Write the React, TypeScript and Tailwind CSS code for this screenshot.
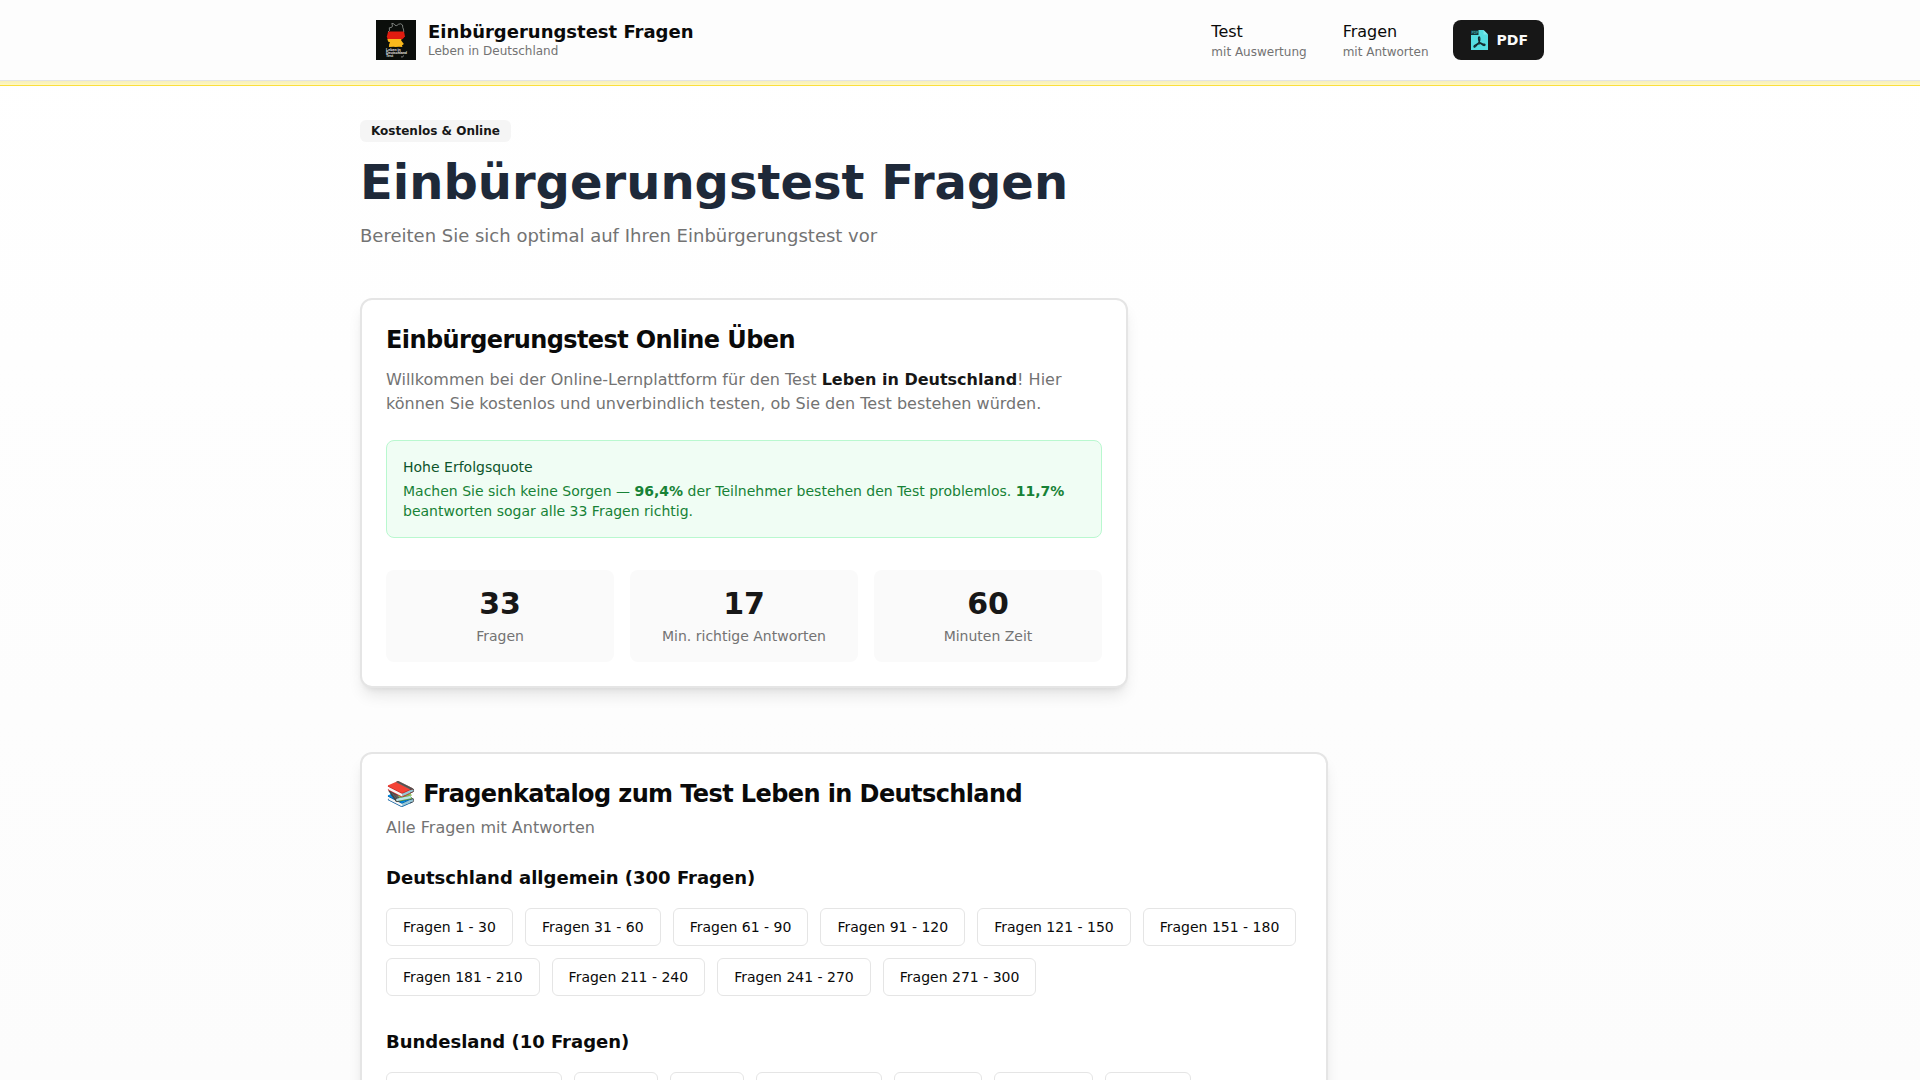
import { type ReactNode } from 'react';

const generalRanges = [
  'Fragen 1 - 30',
  'Fragen 31 - 60',
  'Fragen 61 - 90',
  'Fragen 91 - 120',
  'Fragen 121 - 150',
  'Fragen 151 - 180',
  'Fragen 181 - 210',
  'Fragen 211 - 240',
  'Fragen 241 - 270',
  'Fragen 271 - 300',
];

const states = [
  'Baden-Württemberg',
  'Bayern',
  'Berlin',
  'Brandenburg',
  'Bremen',
  'Hamburg',
  'Hessen',
];

const stats = [
  { value: '33', label: 'Fragen' },
  { value: '17', label: 'Min. richtige Antworten' },
  { value: '60', label: 'Minuten Zeit' },
];

function Logo() {
  return (
    <svg width="40" height="40" viewBox="0 0 40 40" aria-hidden="true">
      <rect width="40" height="40" fill="#0b0e0b" />
      <path d="M12.2 11.5h15.8l.5 2.5.4 2.2-1.2 1.8-1.5 1.2H11.6l-.8-2.7.7-2.500z" fill="#e01c10" />
      <path
        d="M11.4 19h14.100l-.4 1.300 1.600 2.200 1.200 1.500-2 1.600.6 1.400-3.500-.3-3.600.4-1.700-.4-4.800.2.300-3 .9-1.400-2-.9z"
        fill="#f9b81c"
      />
      <path
        d="M12.200 11.800l1.300-1.300-.2-2.700 2.400-.5.8-1.300-.7-2.600 2 .4 1.200 1.500 1.800.3 1.800-1.400 2.200-.4 1.700 1.200.3 2.700.6 1.300.4 2.800"
        fill="none"
        stroke="#a9ada9"
        strokeWidth="0.7"
      />
      <g
        fill="#e4e4e4"
        fontFamily="Liberation Sans, sans-serif"
        fontWeight="700"
        fontSize="3.6"
      >
        <text x="10" y="31.2">Leben in</text>
        <text x="10" y="34.4" textLength="21">Deutschland</text>
        <text x="10" y="37.4">Test</text>
      </g>
      <path d="M25 36.5l1 .8 2-1.8" fill="none" stroke="#d0d0d0" strokeWidth="0.6" />
    </svg>
  );
}

function PdfIcon() {
  return (
    <svg width="17" height="20" viewBox="0 0 17 20" aria-hidden="true">
      <path d="M0 0h12.5L17 4.5V20H0z" fill="#55dde0" />
      <path d="M12.5 0v4.5H17z" fill="#7fe9ea" />
      <rect width="7.5" height="5" fill="#123236" />
      <text
        x="0.5"
        y="3.9"
        fontFamily="Liberation Sans, sans-serif"
        fontSize="3.4"
        fontWeight="700"
        fill="#3fa9ac"
      >
        PDF
      </text>
      <g fill="none" stroke="#14282b" strokeWidth="1.2" strokeLinecap="round">
        <path d="M8.2 12.2c1-2 .9-5.3-.1-5.3s-.7 3.2.3 5.3" />
        <path d="M8.3 12.2c-1.2 1.5-2.3 2.1-4 2.9-1.8.9-1.7 2.3-.5 2 1.3-.4 2.4-2.2 3-3.3" />
        <path d="M8.4 12.2c1 1 1.6 1.6 3.4 1.7 1.9 0 2.7.7 2 1.4-.8.7-2.2-.2-3.3-1.3" />
        <path d="M6.5 14.2l4-.8" />
      </g>
    </svg>
  );
}

function NavItem({ title, subtitle }: { title: string; subtitle: string }) {
  return (
    <a href="#" className="flex flex-col px-3">
      <span className="text-base leading-6">{title}</span>
      <span className="text-xs text-[#737373]">{subtitle}</span>
    </a>
  );
}

function Card({ className, children }: { className: string; children: ReactNode }) {
  return (
    <section
      className={`rounded-xl border-2 border-[#e5e5e5] bg-white px-6 py-6 shadow-lg ${className}`}
    >
      {children}
    </section>
  );
}

function LinkGroup({ items }: { items: string[] }) {
  return (
    <div className="flex flex-wrap gap-3">
      {items.map((item) => (
        <a
          key={item}
          href="#"
          className="flex h-[38px] items-center rounded-md border border-[#e5e5e5] bg-white px-4 text-sm"
        >
          {item}
        </a>
      ))}
    </div>
  );
}

export default function App() {
  return (
    <div className="h-screen overflow-hidden bg-linear-to-b from-white to-[#fcfcfc] font-['DejaVu_Sans',sans-serif] text-[#0a0a0a]">
      <header className="border-b border-[#fbdf3c]">
        <div className="border-b border-[#e3e3e3] bg-[#fdfdfd]">
          <div className="mx-auto flex h-20 w-[1200px] items-center justify-between px-4">
            <a href="#" className="flex items-center gap-3">
              <Logo />
              <div className="flex flex-col">
                <span className="text-lg leading-[22.5px] font-bold">Einbürgerungstest Fragen</span>
                <span className="text-xs text-[#737373]">Leben in Deutschland</span>
              </div>
            </a>
            <nav className="flex items-center gap-3">
              <NavItem title="Test" subtitle="mit Auswertung" />
              <NavItem title="Fragen" subtitle="mit Antworten" />
              <a
                href="#"
                className="flex h-10 w-[91.5px] items-center gap-[9px] rounded-lg bg-[#171717] pl-[18px] text-sm font-bold text-[#fafafa]"
              >
                <PdfIcon />
                PDF
              </a>
            </nav>
          </div>
        </div>
        <div className="h-1 bg-linear-to-b from-[#f7f0ba] to-[#fef7c4]" />
      </header>

      <main className="mx-auto w-[1200px] pt-[34px]">
        <span className="flex h-[22px] w-fit items-center rounded-md bg-[#f5f5f5] px-[11px] text-xs font-bold text-[#171717]">
          Kostenlos &amp; Online
        </span>
        <h1 className="mt-4 text-5xl leading-[48px] font-bold text-[#1e2939]">
          Einbürgerungstest Fragen
        </h1>
        <p className="mt-4 text-lg leading-7 text-[#737373]">
          Bereiten Sie sich optimal auf Ihren Einbürgerungstest vor
        </p>

        <Card className="mt-12 h-[390px] w-[768px]">
          <h2 className="text-2xl font-bold tracking-tight">Einbürgerungstest Online Üben</h2>
          <p className="mt-3 text-base leading-6 text-[#737373]">
            Willkommen bei der Online-Lernplattform für den Test{' '}
            <strong className="text-[#171717]">Leben in Deutschland</strong>! Hier können Sie
            kostenlos und unverbindlich testen, ob Sie den Test bestehen würden.
          </p>
          <div className="mt-6 h-[98px] rounded-lg border border-[#b9f8cf] bg-[#f0fdf4] p-4 text-sm text-[#178236]">
            <div className="text-[#0d542b]">Hohe Erfolgsquote</div>
            <p className="mt-1">
              Machen Sie sich keine Sorgen — <strong>96,4%</strong> der Teilnehmer bestehen den Test
              problemlos. <strong>11,7%</strong> beantworten sogar alle 33 Fragen richtig.
            </p>
          </div>
          <div className="mt-8 grid grid-cols-3 gap-4">
            {stats.map((stat) => (
              <div key={stat.label} className="h-[92px] rounded-lg bg-[#fafafa] p-4 text-center">
                <div className="text-3xl font-bold text-[#171717]">{stat.value}</div>
                <div className="mt-1 text-sm text-[#737373]">{stat.label}</div>
              </div>
            ))}
          </div>
        </Card>

        <Card className="mt-16 w-[968px]">
          <h2 className="text-2xl font-bold tracking-tight">
            📚 Fragenkatalog zum Test Leben in Deutschland
          </h2>
          <p className="mt-1.5 text-base text-[#737373]">Alle Fragen mit Antworten</p>
          <h3 className="mt-6 mb-4 text-lg font-bold">Deutschland allgemein (300 Fragen)</h3>
          <LinkGroup items={generalRanges} />
          <h3 className="mt-8 mb-4 text-lg font-bold">Bundesland (10 Fragen)</h3>
          <LinkGroup items={states} />
        </Card>
      </main>
    </div>
  );
}
